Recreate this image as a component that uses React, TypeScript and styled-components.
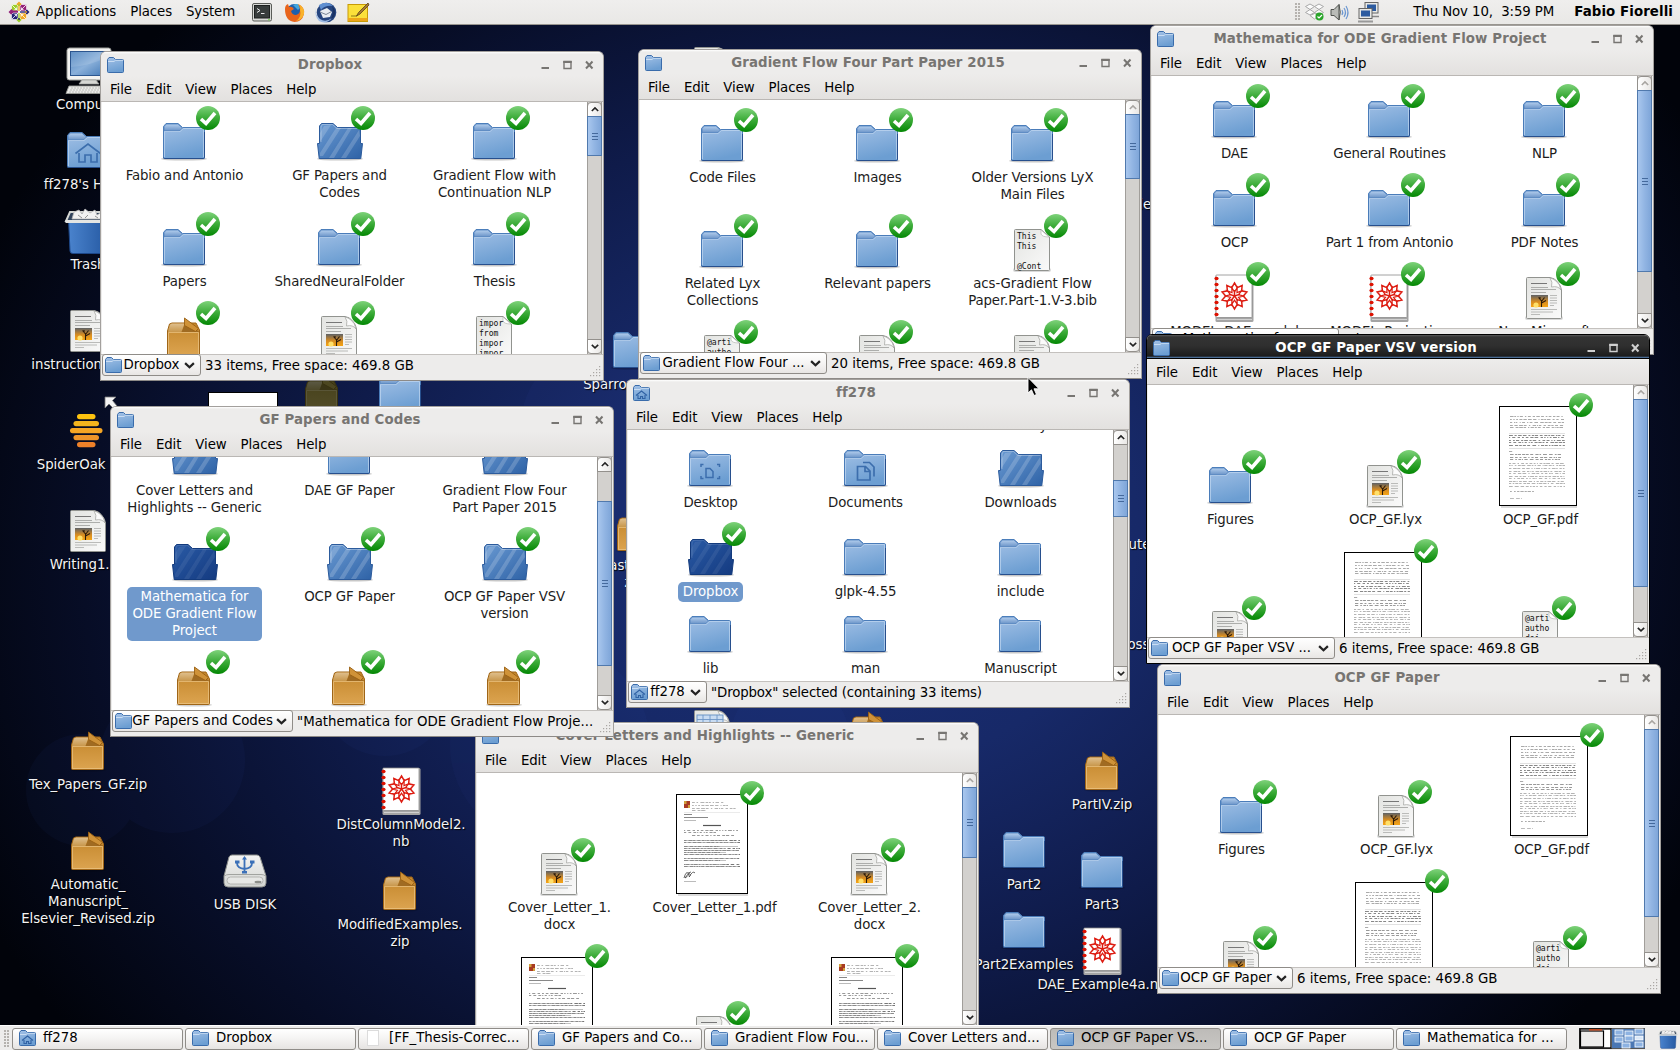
import React from "react";
import styled, { createGlobalStyle, css } from "styled-components";

const Global = createGlobalStyle`
  html, body { margin: 0; padding: 0; }
  body { overflow: hidden; font-family: "DejaVu Sans", sans-serif; font-size: 13.33px; color: #000; }
  * { box-sizing: border-box; }
`;

/* ---------- shell ---------- */
const Screen = styled.div`
  width: 1680px; height: 1050px; display: flex; flex-direction: column; overflow: hidden;
  background: #050a1c;
`;
const Desktop = styled.main`
  position: relative; height: 1000px; flex: none;
`;
const Wallpaper = styled.svg`
  position: absolute; left: 0; top: -25px; width: 1680px; height: 1050px;
`;
const Panel = styled.header`
  height: 25px; flex: none; display: flex; align-items: center; position: relative; z-index: 5;
  background: linear-gradient(#efeeed, #e9e8e6); border-bottom: 1px solid #98958f; padding: 0 7px 0 8px;
  white-space: pre; letter-spacing: -0.1px;
`;
const PanelText = styled.span<{ $bold?: boolean; $ml: number }>`
  margin-left: ${(p) => p.$ml}px; font-weight: ${(p) => (p.$bold ? 700 : 400)}; line-height: 22px;
  ${(p) => p.$bold && css`letter-spacing: 0.1px;`}
`;
const PanelIcon = styled.svg<{ $ml: number }>`
  margin-left: ${(p) => p.$ml}px; flex: none; display: block; overflow: visible;
`;
const Push = styled.div`flex: 1;`;
const Grip = styled.div<{ $h: number }>`
  width: 6px; height: ${(p) => p.$h}px; flex: none;
  background-image: radial-gradient(circle at 1px 1px, #b5b2ae 0.8px, transparent 1px);
  background-size: 3px 3px;
`;
const Taskbar = styled.footer`
  height: 25px; flex: none; display: flex; align-items: center; background: #edeceb; position: relative; z-index: 5;
  border-top: 1px solid #fff; padding: 1px 4px 0 4px;
`;
const TaskList = styled.div`display: flex; gap: 2px; margin-left: 2px;`;
const Task = styled.div<{ $active?: boolean }>`
  width: 171px; height: 22px; border: 1px solid #8f8c88; border-radius: 3px; display: flex; align-items: center;
  padding: 0 6px 1px; gap: 7px; white-space: nowrap; line-height: 18px;
  background: ${(p) => (p.$active ? "linear-gradient(#bdbbb8, #c9c7c4)" : "linear-gradient(#ffffff, #f4f3f2 50%, #e6e4e2)")};
`;

/* ---------- window chrome ---------- */
const Frame = styled.section<{ $x: number; $y: number; $h: number; $active?: boolean }>`
  position: absolute; left: ${(p) => p.$x}px; top: ${(p) => p.$y - 25}px; width: 504px; height: ${(p) => p.$h}px;
  display: flex; flex-direction: column; background: #edeceb; overflow: hidden;
  border: 1px solid ${(p) => (p.$active ? "#000" : "#a3a09d")}; border-bottom-color: ${(p) => (p.$active ? "#000" : "#8d8a87")};
  border-radius: 6px 6px 0 0;
`;
const TitleBar = styled.div<{ $active?: boolean }>`
  height: 24px; flex: none; display: flex; align-items: center; padding: 1px 9px 0 6px;
  color: ${(p) => (p.$active ? "#fff" : "#777572")};
  background: ${(p) =>
    p.$active ? "linear-gradient(#5a5a5a 0, #333 2px, #2f2f2f 45%, #1c1c1c 88%, #4b6f99 94%, #000 97%)" : "linear-gradient(#fff 0, #edeceb 2px)"};
`;
const Title = styled.h1`
  margin: 0; flex: 1; text-align: center; font-size: 13.33px; font-weight: 700; line-height: 22px; white-space: pre;
  padding-right: 5px; letter-spacing: 0.12px;
`;
const WinButtons = styled.svg`width: 53px; height: 10px; display: block; flex: none;`;
const MenuBar = styled.nav`
  height: 26px; flex: none; display: flex; padding: 4px 0 0 2px; line-height: 20px; letter-spacing: -0.1px;
  background: linear-gradient(#edeceb, #e3e1df); border-bottom: 1px solid #bab7b4;
`;
const MenuItem = styled.span`padding: 0 7px;`;
const Body = styled.div`flex: 1; min-height: 0; display: flex; padding: 0 1px;`;
const View = styled.div<{ $scroll: number }>`
  flex: 1; min-width: 0; background: #fff; overflow: hidden; padding: 0 5px;
  & > :first-child { margin-top: ${(p) => p.$scroll}px; }
`;
const Row = styled.div<{ $badged: boolean }>`
  display: grid; grid-template-columns: repeat(3, 155px); padding: ${(p) => (p.$badged ? 12 : 0)}px 0 12px;
`;
const Cell = styled.div`display: flex; flex-direction: column; align-items: center;`;
const IconSlot = styled.div<{ $h: number }>`
  height: ${(p) => p.$h}px; display: flex; align-items: flex-end; margin-right: 1px;
`;
const IconWrap = styled.div`position: relative; display: block;`;
const Badge = styled.svg`position: absolute; right: -12px; top: -12px; width: 24px; height: 24px; display: block;`;
const Glyph = styled.svg`display: block; overflow: visible; flex: none;`;
const Label = styled.div<{ $selected?: boolean; $desk?: boolean }>`
  line-height: 17px; text-align: center; white-space: pre; color: #1c1c1c; letter-spacing: -0.12px;
  padding-top: 1px; margin-bottom: -1px;
  ${(p) => p.$selected && css`
    background: #7099cc; color: #fff; border-radius: 5px; padding: 1px 5px 2px; margin-bottom: -3px;
  `}
  ${(p) => p.$desk && css`color: #f4f4f4; text-shadow: 1px 1px 1px #000; letter-spacing: -0.05px;`}
`;
const DeskItem = styled.div<{ $x: number; $y: number; $dim?: boolean }>`
  position: absolute; left: ${(p) => p.$x - 90}px; top: ${(p) => p.$y - 25}px; width: 180px;
  display: flex; flex-direction: column; align-items: center;
  ${(p) => p.$dim && css`& > svg { filter: brightness(0.45) hue-rotate(18deg) saturate(0.75); }`}
`;
const LinkMark = styled.svg`position: absolute; left: 106px; top: -11px; width: 14px; height: 22px;`;

const Scroll = styled.div`width: 15px; flex: none; display: flex; flex-direction: column; background: #d3d1ce; border-left: 1px solid #a19e9a; border-right: 1px solid #a19e9a;`;
const ScrollBtn = styled.div<{ $down?: boolean }>`
  height: 15px; flex: none; margin: 0 -1px; border: 1px solid #93908c; background: linear-gradient(90deg, #fff, #e9e7e5);
  border-radius: ${(p) => (p.$down ? "0 0 4px 4px" : "4px 4px 0 0")}; display: flex; align-items: center; justify-content: center;
`;
const Thumb = styled.div<{ $gap: number; $h: number }>`
  height: ${(p) => p.$h}px; margin: ${(p) => p.$gap - 1}px -1px 0; flex: none; border: 1px solid #5079ad;
  background: linear-gradient(90deg, #a9c7ee, #92b5e3 50%, #7fa6d9); display: flex; align-items: center; justify-content: center;
`;
const Filler = styled.div`flex: 1;`;
const StatusBar = styled.div`
  height: 26px; flex: none; display: flex; padding: 0 1px 0 1px; position: relative;
  border-top: 1px solid #c4c1be;
`;
const PathButton = styled.div<{ $w: number }>`
  width: ${(p) => p.$w}px; height: 22px; margin-top: -1px; border: 1px solid #8f8c88; border-radius: 3px; display: flex; align-items: center;
  background: linear-gradient(#fff, #f6f5f4 50%, #e8e6e4); padding: 0 5px 0 2px; flex: none; white-space: nowrap;
`;
const PathText = styled.span`flex: 1; text-align: center; line-height: 20px; padding-right: 3px; letter-spacing: -0.05px;`;
const StatusText = styled.span<{ $tight?: boolean }>`
  margin-left: 4px; line-height: 22px; white-space: nowrap; letter-spacing: ${(p) => (p.$tight ? -0.13 : 0)}px;
`;
const Resize = styled.svg`position: absolute; right: 2px; bottom: 3px; width: 12px; height: 12px;`;

/* ---------- drawings ---------- */
const Defs = styled.svg`position: absolute; width: 0; height: 0;`;
const SharedDefs = () => (
  <Defs>
    <defs>
      <linearGradient id="fold" x1="0" y1="0" x2="0.3" y2="1"><stop offset="0" stopColor="#a3c1e6" /><stop offset="1" stopColor="#6c9ed2" /></linearGradient>
      <linearGradient id="tab" x1="0" y1="0" x2="0" y2="1"><stop offset="0" stopColor="#b5cfee" /><stop offset="1" stopColor="#6791c6" /></linearGradient>
      <linearGradient id="open" x1="0" y1="0" x2="1" y2="1"><stop offset="0" stopColor="#6b9bd3" /><stop offset="1" stopColor="#2e62a6" /></linearGradient>
      <linearGradient id="openSel" x1="0" y1="0" x2="1" y2="1"><stop offset="0" stopColor="#2a5ba6" /><stop offset="1" stopColor="#143a80" /></linearGradient>
      <linearGradient id="ok" x1="0" y1="0" x2="0" y2="1"><stop offset="0" stopColor="#7ed27a" /><stop offset="0.5" stopColor="#3bab38" /><stop offset="1" stopColor="#038703" /></linearGradient>
      <linearGradient id="box" x1="0" y1="0" x2="0" y2="1"><stop offset="0" stopColor="#c3862b" /><stop offset="1" stopColor="#dca450" /></linearGradient>
      <linearGradient id="lid" x1="0" y1="0" x2="0" y2="1"><stop offset="0" stopColor="#dfbf8d" /><stop offset="1" stopColor="#c8974c" /></linearGradient>
      <linearGradient id="page" x1="0" y1="0" x2="1" y2="1"><stop offset="0" stopColor="#e3e4e1" /><stop offset="1" stopColor="#fafafa" /></linearGradient>
      <linearGradient id="sun" x1="0" y1="0" x2="0" y2="1"><stop offset="0" stopColor="#5d6166" /><stop offset="0.55" stopColor="#d58b22" /><stop offset="1" stopColor="#f6a515" /></linearGradient>
      <linearGradient id="scr" x1="0" y1="0" x2="1" y2="1"><stop offset="0" stopColor="#4b82be" /><stop offset="0.5" stopColor="#8ab0da" /><stop offset="1" stopColor="#3f76b4" /></linearGradient>
      <linearGradient id="bin" x1="0" y1="0" x2="1" y2="0"><stop offset="0" stopColor="#4a83cd" /><stop offset="1" stopColor="#2559a2" /></linearGradient>
      <linearGradient id="usb" x1="0" y1="0" x2="0" y2="1"><stop offset="0" stopColor="#f4f4f3" /><stop offset="1" stopColor="#d2d4d1" /></linearGradient>
    </defs>
  </Defs>
);

type Kind = "folder" | "home" | "desk" | "docs" | "open" | "openSel" | "box" | "doc" | "plain" | "code" | "nb" | "paper" | "letter" | "computer" | "trash" | "oak" | "usb" | "sheet" | "blank";

const FolderArt = ({ kind }: { kind: Kind }) => (
  <>
    <ellipse cx="24" cy="41" rx="23" ry="1.6" fill="#000" opacity="0.22" />
    <path d="M3.5 39.5V8.5L6 5.5H18L22.500 9.500H43.500Q44.500 9.500 44.500 11V39.500Q44.500 40.500 43.500 40.500H4.500Q3.500 40.500 3.500 39.500Z" fill="url(#fold)" stroke="#4a7cb9" />
    <path d="M4 12.500V8.700L6.200 6H17.800L22.500 10L19.500 13H4.500Z" fill="url(#tab)" stroke="#4f80bd" strokeWidth="0.8" />
    <path d="M4.500 39V13.500H20L23.300 10.500H43.500V39" fill="none" stroke="#c5daf2" strokeWidth="0.9" opacity="0.75" />
    <path d="M3.500 39.500Q3.500 40.500 4.500 40.500H43.500Q44.500 40.500 44.500 39.500V14" fill="none" stroke="#274f8d" />
    {kind === "home" && <path d="M11.500 26.500 24 17l12.500 9.500M15 26v9h6v-7h6v7h6v-9" fill="none" stroke="#3c6ead" strokeWidth="1.7" />}
    {kind === "desk" && <path d="M20 23.500h4l3 3v6h-7ZM15 22v-2.500h2.500M31 19.500h2.500V22M15 31v2.500h2.500M31 33.500h2.500V31" fill="none" stroke="#3c6ead" strokeWidth="1.5" />}
    {kind === "docs" && <path d="M16.500 21.500h8l4.500 4.500v9h-12.500ZM24 22v4.500h5M22 17.500h6.500l4.500 4.500v9.500" fill="none" stroke="#3c6ead" strokeWidth="1.7" />}
  </>
);

const OpenArt = ({ sel }: { sel?: boolean }) => {
  const shape = "M4.500 9V8L6.500 5.500H18L22.500 9.500H45.500V25.500H47.500L45.800 40.500H4.200L2.500 25.500H4.500Z";
  return (
    <>
      <ellipse cx="25" cy="41" rx="23" ry="1.6" fill="#000" opacity="0.22" />
      <path d={shape} fill={`url(#${sel ? "openSel" : "open"})`} />
      <path d="M9 8 5 15V24L16 7ZM21 10 5 35V38L8 38 26 10ZM33 10 14 40H19L37 10ZM44 12 26 40H31L45 18Z" fill="#fff" opacity={sel ? 0.07 : 0.18} />
      <path d={shape} fill="none" stroke={sel ? "#133a7c" : "#2c5b9c"} />
      <path d="M6 24V9L7.200 6.500H17.500L22 10.500H44.500" fill="none" stroke="#fff" strokeWidth="0.8" opacity={sel ? 0.15 : 0.4} />
    </>
  );
};

const BoxArt = () => (
  <>
    <ellipse cx="24" cy="43" rx="18" ry="1.600" fill="#000" opacity="0.18" />
    <path d="M7.500 18 9.500 11 12 10H36L39.500 17V41.500Q39.500 42.500 38.500 42.500H8.500Q7.500 42.500 7.500 41.500Z" fill="url(#box)" stroke="#9f6517" />
    <path d="M8 18.500 10 11.500 12 10.500H24.500L21.500 19H8Z" fill="url(#lid)" />
    <path d="M21.500 19 24.500 12 38.500 18 39 19Z" fill="#a06b22" />
    <path d="M24.500 5 38.500 15.500 35.500 18.500 24.500 12.500Z" fill="#cf9238" stroke="#9a6013" strokeWidth="0.9" />
    <path d="M8.500 41.500V19.500H38.500V41.500Z" fill="none" stroke="#edc88a" strokeWidth="0.9" opacity="0.75" />
  </>
);

const PageShape = ({ fold = true }: { fold?: boolean }) => (
  <>
    <rect x="5" y="42" width="38" height="4" rx="2" fill="#000" opacity="0.15" />
    <path d={fold ? "M6.500 4.500Q6.500 3.500 7.500 3.500H30Q35 4 38 8.500 41 12 41.500 16V43.500Q41.500 44.500 40.500 44.500H7.500Q6.500 44.500 6.500 43.500Z" : "M6.500 4.500Q6.500 3.500 7.500 3.500H33L41.500 11V43.500Q41.500 44.500 40.500 44.500H7.500Q6.500 44.500 6.500 43.500Z"} fill="url(#page)" stroke="#91938f" />
    {fold ? <path d="M30 4Q33 8 31.500 13 38 11.500 41 16 40 10 36 7 33 4.500 30 4Z" fill="#fbfbfb" stroke="#a9aba7" strokeWidth="0.8" /> : <path d="M33 4V8Q34 11 41 11Z" fill="#fff" stroke="#b5b7b3" strokeWidth="0.7" />}
  </>
);

const DocArt = ({ pic }: { pic?: boolean }) => (
  <>
    <PageShape />
    <path d="M11 9.500H27" stroke="#777" /><path d="M11 13.500H28M11 15.500H36M11 18.500H26" stroke="#a5a6a4" strokeWidth="0.9" />
    {pic && (
      <>
        <rect x="11" y="21" width="17" height="12" fill="url(#sun)" />
        <circle cx="16" cy="31" r="2.600" fill="#ffe06a" />
        <path d="M21.500 33V27L18.500 23.500M21.500 27.500 24.500 23.500M21.500 29 26 26.500M20 25.500V23" stroke="#2c1b0a" strokeWidth="1.1" fill="none" />
      </>
    )}
    <path d="M30 21.500H37M30 24H37M30 26.500H37M30 29H37M30 31.500H34M11 35.500H37M11 38H33M11 40.500H20" stroke="#b3b4b2" strokeWidth="0.9" />
  </>
);

const CodeArt = ({ lines }: { lines: string[] }) => (
  <>
    <PageShape fold={false} />
    {lines.map((l, i) => (
      <text key={i} transform={`translate(9 ${13 + i * 10}) scale(1 1.15)`} fontFamily='"DejaVu Sans Mono", monospace' fontSize="8.100" fill="#111" xmlSpace="preserve">{l}</text>
    ))}
  </>
);

const ring = (n: number, r1: number, r2: number) =>
  Array.from({ length: n * 2 }, (_, i) => {
    const a = (i * Math.PI) / n - Math.PI / 2;
    const r = i % 2 ? r2 : r1;
    return `${(24.5 + Math.cos(a) * r).toFixed(2)},${(22 + Math.sin(a) * r).toFixed(2)}`;
  }).join(" ");

const NbArt = () => (
  <>
    <rect x="5.500" y="1" width="38" height="47" rx="1.500" fill="#a4a4a4" />
    <rect x="6" y="1" width="36" height="42.500" rx="0.500" fill="#fff" stroke="#8b8b8b" strokeWidth="0.8" />
    <path d="M7 45.500H42" stroke="#d0d0d0" />
    {[4, 10, 16, 22, 28, 34, 40].map((y) => <ellipse key={y} cx="6.500" cy={y + 0.5} rx="2.100" ry="1.800" fill="#dd1100" />)}
    <polygon points={ring(10, 13, 8.8)} fill="none" stroke="#dd1c11" strokeWidth="1.500" />
    <polygon points={ring(10, 4.2, 8.8)} fill="none" stroke="#dd1c11" strokeWidth="1.200" />
    {[0, 1, 2, 3, 4].map((i) => {
      const a = (i * 2 * Math.PI) / 5 - Math.PI / 2;
      return <path key={i} d={`M24.500 22L${24.5 + Math.cos(a) * 6} ${22 + Math.sin(a) * 6}`} stroke="#dd1c11" strokeWidth="1.500" />;
    })}
  </>
);

const rand = (n: number) => { const v = Math.sin(n * 127.1) * 43758.5453; return v - Math.floor(v); };
const dashes = (x0: number, x1: number, y: number, seed: number) => {
  let d = ""; let x = x0; let k = seed * 31;
  while (x < x1) { const w = 1 + rand(k++) * 3; d += `M${x.toFixed(1)} ${y}h${Math.min(w, x1 - x).toFixed(1)}`; x += w + 0.6 + rand(k++) * 1.8; }
  return d;
};

const PaperArt = () => {
  const rows: [number, number, number, string][] = [];
  [11, 14, 17, 20, 22].forEach((y) => rows.push([11, 65, y, "#aaa"]));
  [30, 32, 35, 37, 40].forEach((y) => rows.push([10, 66, y, "#888"]));
  rows.push([10, 15, 46, "#aaa"]);
  [49, 52, 54].forEach((y) => rows.push([11, 62, y, "#999"]));
  [58, 60, 63, 66, 68, 71, 73, 76, 78, 81].forEach((y) => rows.push([10, 66, y, "#b4b4b4"]));
  rows.push([11, 36, 86, "#aaa"], [11, 23, 93, "#bbb"]);
  return (
    <>
      <rect x="2" y="98" width="76" height="5" fill="#000" opacity="0.14" />
      <rect x="0.500" y="1.500" width="77" height="99" fill="#fff" stroke="#000" />
      <path d="M10 28.500H66M10 43.500H66" stroke="#ccc" strokeWidth="0.6" />
      {rows.map(([a, b, y, c], i) => <path key={i} d={dashes(a, b, y + 0.5, i + 3)} stroke={c} strokeWidth="1" />)}
    </>
  );
};

const LetterArt = () => {
  const solid = [47, 49, 53, 55, 57, 59, 61, 65, 67, 71, 73];
  return (
    <>
      <rect x="2" y="98" width="70" height="5" fill="#000" opacity="0.14" />
      <rect x="0.500" y="1.500" width="71" height="99" fill="#fff" stroke="#000" />
      <rect x="8" y="8" width="6" height="7" fill="#a83a22" /><path d="M8 8h2.500v3H8ZM12 12h2v3h-2Z" fill="#d2a13c" />
      <path d={dashes(16, 48, 9.5, 2) + dashes(16, 52, 12.5, 4) + dashes(16, 60, 15.5, 6) + dashes(16, 30, 17.5, 7)} stroke="#b4b4b4" strokeWidth="1" />
      <path d="M8 19.500H64" stroke="#ddd" strokeWidth="0.6" />
      <path d="M8 21.500H16M8 24.500H32" stroke="#888" strokeWidth="1" /><path d="M8 27.500H20" stroke="#bbb" strokeWidth="1" />
      <path d="M27 32.500H45" stroke="#555" strokeWidth="1.200" />
      <path d={dashes(8, 62, 37.5, 9) + dashes(8, 40, 39.5, 11) + dashes(16, 58, 42.5, 15)} stroke="#999" strokeWidth="1" />
      {solid.map((y, i) => <path key={y} d={dashes(8, i % 3 === 2 ? 44 : 64, y + 0.5, i + 20)} stroke="#777" strokeWidth="1" />)}
      {solid.map((y) => <path key={`s${y}`} d={`M8 ${y + 0.5}H${y % 4 === 1 ? 62 : 50}`} stroke="#999" strokeWidth="1" opacity="0.6" />)}
      <path d="M8 85q2-7 4-5t-3 5q4-6 5-4t-1 3q4-7 6-4M12 80l3-1" fill="none" stroke="#444" strokeWidth="0.8" />
      <path d="M8 88.500H20" stroke="#aaa" strokeWidth="0.8" />
    </>
  );
};

const ComputerArt = () => (
  <>
    <rect x="2" y="1" width="44" height="32" rx="2.500" fill="#f3f3f1" stroke="#9b9d99" />
    <rect x="5.500" y="4.500" width="37" height="24" fill="url(#scr)" stroke="#2c568f" />
    <path d="M6 20Q25 19 42 10V5H6Z" fill="#fff" opacity="0.12" />
    <path d="M17 33h14l3 4H14Z" fill="#d6d7d4" stroke="#a0a19e" strokeWidth="0.8" />
    <path d="M4 39H44L47 46.500H1Z" fill="#e9e9e7" stroke="#9b9d99" strokeWidth="0.9" />
    <path d="M6 41H42M5 43H43M4 45H44" stroke="#b9bab7" strokeWidth="0.9" strokeDasharray="2 1" />
  </>
);
const TrashArt = () => (
  <>
    <path d="M4.500 13 6 44Q6 46.500 9 46.500H39Q42 46.500 42 44L43.500 13Z" fill="url(#bin)" stroke="#1c4687" />
    <path d="M6 5H42L46 14H2Z" fill="#31435c" stroke="#d5d7d4" strokeWidth="2" />
    <path d="M8 12 10 5 15 3 18 7 21 2 26 6 31 3 33 8 38 5 41 12Z" fill="#f1f1f1" stroke="#b5b5b5" strokeWidth="0.8" />
    <path d="M14 8l4 3M24 8l-3 3M31 9l3 2" stroke="#888" strokeWidth="0.9" />
    <path d="M1.500 14.500H46.500" stroke="#e4e5e3" strokeWidth="3" />
  </>
);
const OakArt = () => (
  <>
    {[["#fdc30f", 13, 18.5, 7], ["#f3b41d", 9.5, 25.5, 14], ["#f5a524", 6, 32.5, 21], ["#ee9429", 9.5, 25.5, 28], ["#ee8129", 13, 18.5, 35]].map(([c, x, w, y]) => (
      <rect key={y as number} x={x} y={y} width={w} height="5.200" rx="2.600" fill={c as string} />
    ))}
  </>
);
const UsbArt = () => (
  <>
    <path d="M8 10Q9 8 11 8H36Q38 8 39 10L45 29V36Q45 40 41 40H7Q3 40 3 36V29Z" fill="url(#usb)" stroke="#8d8f8b" />
    <path d="M3.500 29Q5 27.500 8 27.500H40Q43 27.500 44.500 29" fill="none" stroke="#a1a39f" />
    <rect x="6" y="30" width="36" height="7" rx="3.500" fill="#e6e7e5" stroke="#a8aaa6" strokeWidth="0.8" />
    <ellipse cx="37" cy="35" rx="3.500" ry="1.300" fill="#8b8d89" />
    <path d="M23.500 25V11M23.500 22Q16 21 16 16M23.500 22Q31 21 31 16" stroke="#3b70b8" strokeWidth="1.800" fill="none" />
    <path d="M23.500 9 26 12.500H21ZM14 13.500h4.500v3H14ZM29 13.500h4.500v3H29ZM21 24h5v2.500h-5Z" fill="#3b70b8" />
  </>
);
const SheetArt = () => (
  <>
    <PageShape />
    <rect x="9" y="8" width="26" height="26" fill="#c9dcf2" stroke="#6d95c6" />
    <path d="M9 12.500H35M9 17H35M9 21.500H35M15 8V34M22 8V34M29 8V34" stroke="#6d95c6" strokeWidth="0.9" />
  </>
);

const sizeOf = (k: Kind): [number, number] => (k === "paper" ? [82, 105] : k === "letter" ? [76, 105] : [48, 48]);
const Art = ({ kind, code }: { kind: Kind; code?: string[] }) => {
  switch (kind) {
    case "open": return <OpenArt />;
    case "openSel": return <OpenArt sel />;
    case "box": return <BoxArt />;
    case "doc": return <DocArt pic />;
    case "plain": return <DocArt />;
    case "code": return <CodeArt lines={code || []} />;
    case "nb": return <NbArt />;
    case "paper": return <PaperArt />;
    case "letter": return <LetterArt />;
    case "computer": return <ComputerArt />;
    case "trash": return <TrashArt />;
    case "oak": return <OakArt />;
    case "usb": return <UsbArt />;
    case "sheet": return <SheetArt />;
    case "blank": return <rect x="-11.500" y="-2.500" width="69" height="60" fill="#fff" stroke="#000" />;
    default: return <FolderArt kind={kind} />;
  }
};
const Icon = ({ kind, code }: { kind: Kind; code?: string[] }) => {
  const [w, h] = sizeOf(kind);
  return <Glyph width={w} height={h} viewBox={`0 0 ${w} ${h}`}><Art kind={kind} code={code} /></Glyph>;
};
const OkBadge = () => (
  <Badge viewBox="0 0 24 24">
    <circle cx="12" cy="12" r="12" fill="url(#ok)" />
    <path d="M5 13 10 17.500 19 7" fill="none" stroke="#fff" strokeWidth="3.600" />
  </Badge>
);
const MiniFolder = ({ home }: { home?: boolean }) => (
  <Glyph width={17} height={16} viewBox="0 0 17 16">
    <path d="M0.500 14.500V2.500L2 0.500H6.500L8.500 2.500H15.500Q16.500 2.500 16.500 3.500V14.500Q16.500 15.500 15.500 15.500H1.500Q0.500 15.500 0.500 14.500Z" fill="url(#fold)" stroke="#3a6cab" />
    <path d="M1 4.500H7L8.500 3.300H16" fill="none" stroke="#d7e6f7" strokeWidth="0.8" />
    {home && <path d="M3 10.500 8.500 6 14 10.500M5 10V13.500H7.500V11.500H9.500V13.500H12V10" fill="none" stroke="#3062a4" strokeWidth="1.100" />}
  </Glyph>
);
const Chevron = ({ up, dim, w = 11 }: { up?: boolean; dim?: boolean; w?: number }) => (
  <Glyph width={w} height={w * 0.6} viewBox="0 0 10 6">
    <path d={up ? "M1 5 5 1.200 9 5" : "M1 1 5 4.800 9 1"} fill="none" stroke={dim ? "#a8a5a1" : "#222"} strokeWidth={2} />
  </Glyph>
);

/* ---------- data ---------- */
type Item = { k: Kind; n: string; b?: boolean; sel?: boolean; code?: string[] };
type Win = {
  x: number; y: number; h: number; title: string; path: string; pathW: number; status: string; home?: boolean; active?: boolean;
  scroll: number; thumb: [number, number]; rows: Item[][];
};
const f = (n: string): Item => ({ k: "folder", n, b: true });
const artCode = ["@arti", "autho", "doi ="];
const ocpRows: Item[][] = [
  [f("Figures"), { k: "doc", n: "OCP_GF.lyx", b: true }, { k: "paper", n: "OCP_GF.pdf", b: true }],
  [{ k: "doc", n: "", b: true }, { k: "paper", n: "", b: true }, { k: "code", n: "", b: true, code: artCode }],
];
const windows: Win[] = [
  { x: 475, y: 722, h: 330, title: "Cover Letters and Highlights -- Generic", path: "", pathW: 187, status: "", scroll: 8, thumb: [0, 71],
    rows: [
      [{ k: "doc", n: "Cover_Letter_1.\ndocx", b: true }, { k: "letter", n: "Cover_Letter_1.pdf", b: true }, { k: "doc", n: "Cover_Letter_2.\ndocx", b: true }],
      [{ k: "letter", n: "", b: true }, { k: "plain", n: "", b: true }, { k: "letter", n: "", b: true }],
    ] },
  { x: 626, y: 379, h: 329, title: "ff278", path: "ff278", pathW: 79, status: "\"Dropbox\" selected (containing 33 items)", home: true, scroll: -62, thumb: [36, 37],
    rows: [
      [{ k: "folder", n: "" }, { k: "folder", n: "" }, { k: "folder", n: "Memory" }],
      [{ k: "desk", n: "Desktop" }, { k: "docs", n: "Documents" }, { k: "open", n: "Downloads" }],
      [{ k: "openSel", n: "Dropbox", b: true, sel: true }, { k: "folder", n: "glpk-4.55" }, { k: "folder", n: "include" }],
      [{ k: "folder", n: "lib" }, { k: "folder", n: "man" }, { k: "folder", n: "Manuscript" }],
    ] },
  { x: 100, y: 51, h: 330, title: "Dropbox", path: "Dropbox", pathW: 99, status: "33 items, Free space: 469.8 GB", scroll: 4, thumb: [0, 40],
    rows: [
      [f("Fabio and Antonio"), { k: "open", n: "GF Papers and\nCodes", b: true }, f("Gradient Flow with\nContinuation NLP")],
      [f("Papers"), f("SharedNeuralFolder"), f("Thesis")],
      [{ k: "box", n: "", b: true }, { k: "doc", n: "", b: true }, { k: "code", n: "", b: true, code: ["impor", "from", "impor", "impor"] }],
    ] },
  { x: 638, y: 49, h: 330, title: "Gradient Flow Four Part Paper 2015", path: "Gradient Flow Four ...", pathW: 187, status: "20 items, Free space: 469.8 GB", scroll: 8, thumb: [0, 65],
    rows: [
      [f("Code Files"), f("Images"), f("Older Versions LyX\nMain Files")],
      [f("Related Lyx\nCollections"), f("Relevant papers"), { k: "code", n: "acs-Gradient Flow\nPaper.Part-1.V-3.bib", b: true, code: ["This", "This", "", "@Cont"] }],
      [{ k: "code", n: "", b: true, code: artCode }, { k: "plain", n: "", b: true }, { k: "plain", n: "", b: true }],
    ] },
  { x: 110, y: 406, h: 331, title: "GF Papers and Codes", path: "GF Papers and Codes", pathW: 181, status: "\"Mathematica for ODE Gradient Flow Proje...", scroll: -36, thumb: [30, 165],
    rows: [
      [{ k: "open", n: "Cover Letters and\nHighlights -- Generic", b: true }, f("DAE GF Paper"), { k: "open", n: "Gradient Flow Four\nPart Paper 2015", b: true }],
      [{ k: "openSel", n: "Mathematica for\nODE Gradient Flow\nProject", b: true, sel: true }, { k: "open", n: "OCP GF Paper", b: true }, { k: "open", n: "OCP GF Paper VSV\nversion", b: true }],
      [{ k: "box", n: "", b: true }, { k: "box", n: "", b: true }, { k: "box", n: "", b: true }],
    ] },
  { x: 1150, y: 25, h: 330, title: "Mathematica for ODE Gradient Flow Project", path: "Mathematica for ...", pathW: 187, status: "9 items, Free space: 469.8 GB", scroll: 8, thumb: [0, 182],
    rows: [
      [f("DAE"), f("General Routines"), f("NLP")],
      [f("OCP"), f("Part 1 from Antonio"), f("PDF Notes")],
      [{ k: "nb", n: "MODEL_DAE_model", b: true }, { k: "nb", n: "MODEL_Projection", b: true }, { k: "doc", n: "New Microsoft", b: true }],
    ] },
  { x: 1157, y: 664, h: 330, title: "OCP GF Paper", path: "OCP GF Paper", pathW: 134, status: "6 items, Free space: 469.8 GB", scroll: 8, thumb: [0, 188], rows: ocpRows },
  { x: 1146, y: 334, h: 330, title: "OCP GF Paper VSV version", path: "OCP GF Paper VSV ...", pathW: 187, status: "6 items, Free space: 469.8 GB", active: true, scroll: 8, thumb: [0, 188], rows: ocpRows },
];

const deskItems: { k: Kind; x: number; y: number; n: string; dim?: boolean; link?: boolean }[] = [
  { k: "computer", x: 89, y: 47, n: "Computer" },
  { k: "home", x: 88, y: 127, n: "ff278's Home" },
  { k: "trash", x: 88, y: 207, n: "Trash" },
  { k: "doc", x: 88, y: 307, n: "instructions.docx" },
  { k: "oak", x: 88, y: 407, n: "SpiderOak Hive", link: true },
  { k: "doc", x: 88, y: 507, n: "Writing1.nb" },
  { k: "box", x: 88, y: 727, n: "Tex_Papers_GF.zip" },
  { k: "box", x: 88, y: 827, n: "Automatic_\nManuscript_\nElsevier_Revised.zip" },
  { k: "blank", x: 244, y: 395, n: "" },
  { k: "usb", x: 245, y: 847, n: "USB DISK" },
  { k: "box", x: 322, y: 371, n: "", dim: true },
  { k: "folder", x: 400, y: 371, n: "" },
  { k: "nb", x: 401, y: 767, n: "DistColumnModel2.\nnb" },
  { k: "box", x: 400, y: 867, n: "ModifiedExamples.\nzip" },
  { k: "folder", x: 634, y: 327, n: "Sparrow_Codes" },
  { k: "box", x: 634, y: 508, n: "Master_v1.\nzip" },
  { k: "plain", x: 712, y: 44, n: "" },
  { k: "sheet", x: 712, y: 707, n: "" },
  { k: "box", x: 868, y: 707, n: "" },
  { k: "folder", x: 1102, y: 147, n: "Base1Example" },
  { k: "folder", x: 1102, y: 487, n: "Data_compute" },
  { k: "folder", x: 1102, y: 587, n: "ExampleGross" },
  { k: "box", x: 1102, y: 747, n: "PartIV.zip" },
  { k: "folder", x: 1024, y: 827, n: "Part2" },
  { k: "folder", x: 1102, y: 847, n: "Part3" },
  { k: "folder", x: 1024, y: 907, n: "Part2Examples" },
  { k: "nb", x: 1102, y: 927, n: "DAE_Example4a.nb" },
];

const tasks: { n: string; icon: "home" | "folder" | "page"; active?: boolean }[] = [
  { n: "ff278", icon: "home" }, { n: "Dropbox", icon: "folder" }, { n: "[FF_Thesis-Correc...", icon: "page" },
  { n: "GF Papers and Co...", icon: "folder" }, { n: "Gradient Flow Fou...", icon: "folder" }, { n: "Cover Letters and...", icon: "folder" },
  { n: "OCP GF Paper VS...", icon: "folder", active: true }, { n: "OCP GF Paper", icon: "folder" }, { n: "Mathematica for ...", icon: "folder" },
];

/* ---------- composites ---------- */
const FileWindow = ({ w }: { w: Win }) => (
  <Frame $x={w.x} $y={w.y} $h={w.h} $active={w.active}>
    <TitleBar $active={w.active}>
      <MiniFolder home={w.home} />
      <Title>{w.title}</Title>
      <WinButtons viewBox="0 0 53 10">
        <g stroke={w.active ? "#d0d0d0" : "#777572"} fill="none" strokeWidth="2">
          <path d="M0.500 8H8" />
          <path d="M23 1.500H30V8.500H23Z" strokeWidth="1.400" /><path d="M22.300 2H30.700" />
          <path d="M45 1.500 51.500 8.500M51.500 1.500 45 8.500" />
        </g>
      </WinButtons>
    </TitleBar>
    <MenuBar>{["File", "Edit", "View", "Places", "Help"].map((m) => <MenuItem key={m}>{m}</MenuItem>)}</MenuBar>
    <Body>
      <View $scroll={w.scroll}>
        {w.rows.map((row, ri) => {
          const slot = Math.max(...row.map((it) => sizeOf(it.k)[1]));
          return (
            <Row key={ri} $badged={row.some((it) => it.b)}>
              {row.map((it, i) => (
                <Cell key={i}>
                  <IconSlot $h={slot}><IconWrap><Icon kind={it.k} code={it.code} />{it.b && <OkBadge />}</IconWrap></IconSlot>
                  <Label $selected={it.sel}>{it.n || " "}</Label>
                </Cell>
              ))}
            </Row>
          );
        })}
      </View>
      <Scroll>
        <ScrollBtn><Chevron up dim={w.scroll === 8} w={8} /></ScrollBtn>
        <Thumb $gap={w.thumb[0]} $h={w.thumb[1]}>
          <Glyph width="6" height="7" viewBox="0 0 6 7"><path d="M0 0.500H6M0 3.500H6M0 6.500H6" stroke="#44699c" /></Glyph>
        </Thumb>
        <Filler />
        <ScrollBtn $down><Chevron w={8} /></ScrollBtn>
      </Scroll>
    </Body>
    <StatusBar>
      <PathButton $w={w.pathW}><MiniFolder home={w.home} /><PathText>{w.path}</PathText><Chevron /></PathButton>
      <StatusText $tight={w.home}>{w.status}</StatusText>
      <Resize viewBox="0 0 12 12">
        {[0, 1, 2, 3].map((r) => Array.from({ length: r + 1 }, (_, c) => <rect key={`${r}${c}`} x={10 - c * 3} y={1 + r * 3} width="1.200" height="1.200" fill="#aaa7a3" />))}
      </Resize>
    </StatusBar>
  </Frame>
);

const Background = () => (
  <Wallpaper viewBox="0 0 1680 1050">
    <defs>
      <radialGradient id="glow" gradientUnits="userSpaceOnUse" cx="0" cy="0" r="1" gradientTransform="translate(850 540) rotate(-8) scale(960 780)">
        <stop offset="0" stopColor="#1a2f78" /><stop offset="0.3" stopColor="#172968" /><stop offset="0.55" stopColor="#0f1b4a" /><stop offset="0.8" stopColor="#070d26" /><stop offset="1" stopColor="#01030a" />
      </radialGradient>
    </defs>
    <rect width="1680" height="1050" fill="url(#glow)" />
    <g fill="#3b5fd0" opacity="0.045">
      <circle cx="172" cy="760" r="73" /><circle cx="82" cy="790" r="56" /><circle cx="550" cy="745" r="100" /><circle cx="385" cy="690" r="66" />
      <circle cx="790" cy="740" r="60" /><circle cx="610" cy="430" r="90" />
    </g>
  </Wallpaper>
);

const TopPanel = () => (
  <Panel>
    <PanelIcon $ml={0} width="22" height="22" viewBox="0 0 22 22">
      {[["#efa724", "#9ccd2a"], ["#262577", "#efa724"], ["#9ccd2a", "#262577"], ["#932279", "#932279"]].map(([a, b], i) => (
        <g key={i} transform={`rotate(${i * 90} 11 11)`}>
          <path d="M11 0.500 14 3.500 12.500 5V10H9.500V5L8 3.500Z" fill={a} />
          <path d="M3.500 3.500H8.500L10 5V10H5L3.500 8.500Z" fill={["#9ccd2a", "#932279", "#efa724", "#262577"][i]} stroke="#fff" strokeWidth="0.6" />
          <path d="M4 4 10 10M8.500 6.500V8.500H6.500" stroke="#fff" strokeWidth="0.8" fill="none" />
          <circle cx="11" cy="4" r="0.900" fill={b} />
        </g>
      ))}
    </PanelIcon>
    <PanelText $ml={6}>Applications</PanelText>
    <PanelText $ml={14}>Places</PanelText>
    <PanelText $ml={14}>System</PanelText>
    <PanelIcon $ml={17} width="21" height="19" viewBox="0 0 21 19">
      <rect x="0.500" y="0.500" width="19" height="17.500" rx="1.500" fill="#d8d9d6" stroke="#5a5c58" /><rect x="2.500" y="2.500" width="15" height="12.500" fill="#383d3c" stroke="#1d201f" />
      <path d="M5 5.500 8 7.500 5 9.500M9 10.500H12.500" stroke="#e8e8e8" fill="none" /><path d="M16 16.800h2" stroke="#6ad13d" />
    </PanelIcon>
    <PanelIcon $ml={11} width="21" height="21" viewBox="0 0 21 21">
      <circle cx="10.500" cy="10" r="8" fill="#1e5fae" /><path d="M9 3Q14 0 17 5L14 8Z" fill="#41a6dd" />
      <path d="M1 7Q1 3 4 2L5 5Q8 4 10 7L7 9Q8 13 12 13 16 12 16 8 16 5 14 2 21 5 20 12 18 20 10.500 20 1 19 1 7Z" fill="#e8641b" />
      <path d="M16 8Q17 4 14 2 21 5 20 12 18 18 12 19 18 15 16 8Z" fill="#f9b32c" />
    </PanelIcon>
    <PanelIcon $ml={10} width="22" height="21" viewBox="0 0 22 21">
      <circle cx="11.500" cy="10.500" r="9.800" fill="#26457f" /><path d="M4 3Q12-2 18 4 10 3 6 8Z" fill="#5f8fd1" />
      <path d="M5 9 12 6 17 10 15 15 8 16Z" fill="#e9edf2" /><path d="M5 10 11 12.500 16.500 9.500" stroke="#7b8797" fill="none" />
      <path d="M1 5Q-0.500 13 5 17T17 16Q11 23 4 19 -1 14 1 5Z" fill="#9fbce4" /><path d="M17 4Q22 9 19 15L16 17Q19 10 17 4Z" fill="#1a3364" />
    </PanelIcon>
    <PanelIcon $ml={10} width="22" height="21" viewBox="0 0 22 21">
      <rect x="1" y="2.500" width="19.500" height="17" fill="#fbe03a" stroke="#c79a06" /><path d="M1 17.500H20.500" stroke="#eda61a" strokeWidth="3" /><path d="M4 14H10" stroke="#8d7a16" />
      <path d="M21 1 11.500 10.500 9.500 14 13 12 22 3Z" fill="#a77a33" stroke="#5b4317" strokeWidth="0.8" />
    </PanelIcon>
    <Push />
    <Grip $h={18} />
    <PanelIcon $ml={4} width="20" height="18" viewBox="0 0 20 18">
      <path d="M5 1 9.500 3.500 5 6.500 0.500 3.500ZM14 1 18.500 3.500 14 6.500 9.500 3.500ZM5 6.500 9.500 9.500 5 12 0.500 9.500ZM14 6.500 18.500 9.500 14 12 9.500 9.500ZM5 12.500 9.500 10.500 14 12.500 9.500 16Z" fill="#fbfbfb" stroke="#a9a9a9" />
      <circle cx="14.500" cy="13.500" r="4" fill="#2aa52a" /><path d="M12.500 13.500 14 15 17 12" stroke="#fff" strokeWidth="1.200" fill="none" />
    </PanelIcon>
    <PanelIcon $ml={5} width="20" height="19" viewBox="0 0 20 19">
      <path d="M1 6.500H4L9 1.500V17L4 12.500H1Z" fill="#b9bbb7" stroke="#4f524e" /><path d="M9 1.500Q11.500 9 9 17" fill="none" stroke="#4f524e" />
      <path d="M12 7Q13.500 9.500 12 12M14 5Q17 9.500 14 14M16 3Q20 9.500 16 16" fill="none" stroke="#6c97d1" strokeWidth="1.200" />
    </PanelIcon>
    <PanelIcon $ml={7} width="23" height="21" viewBox="0 0 23 21">
      <rect x="8" y="0.500" width="13" height="10.500" fill="#e8e9e6" stroke="#666" /><rect x="10" y="2.500" width="9" height="6.500" fill="#2c5ba0" /><path d="M11 14.500H22" stroke="#888" strokeWidth="1.500" />
      <rect x="2" y="6.500" width="13" height="10" fill="#e8e9e6" stroke="#666" /><rect x="4" y="8.500" width="9" height="6" fill="#2c5ba0" /><path d="M1 19.500H16" stroke="#999" strokeWidth="2" />
    </PanelIcon>
    <PanelText $ml={33}>Thu Nov 10,  3:59 PM</PanelText>
    <PanelText $ml={20} $bold>Fabio Fiorelli</PanelText>
  </Panel>
);

const BottomPanel = () => (
  <Taskbar>
    <Grip $h={18} />
    <TaskList>
      {tasks.map((t) => (
        <Task key={t.n} $active={t.active}>
          {t.icon === "page" ? <Glyph width="17" height="16" viewBox="0 0 17 16"><rect x="2.500" y="0.500" width="11" height="15" fill="#fff" stroke="#dcdcdc" /></Glyph> : <MiniFolder home={t.icon === "home"} />}
          {t.n}
        </Task>
      ))}
    </TaskList>
    <PanelIcon $ml={12} width="66" height="21" viewBox="0 0 66 21">
      <rect x="0.500" y="0.500" width="65" height="20" fill="#fff" stroke="#555" />
      <rect x="1" y="1" width="31" height="19" fill="#fff" stroke="#000" strokeWidth="1.300" /><rect x="1.500" y="3" width="23" height="16" fill="#edeceb" stroke="#000" strokeWidth="1.200" /><path d="M10 1.800H23" stroke="#c0491f" strokeWidth="1.600" />
      <rect x="33" y="1" width="32.500" height="19" fill="#4a77b4" />
      {[[36, 2, 8, 5], [46, 3, 8, 5], [56, 1, 8, 5], [36, 9, 8, 5], [46, 8, 8, 5], [56, 8, 8, 4], [43, 15, 8, 5], [56, 14, 8, 5]].map(([x, y, a, b]) => (
        <rect key={`${x}-${y}`} x={x} y={y} width={a} height={b} fill={x === 56 && y === 8 ? "#dbe8f8" : "#8db2e2"} stroke="#fff" strokeWidth="0.8" />
      ))}
    </PanelIcon>
    <PanelIcon $ml={13} width="20" height="20" viewBox="0 0 48 48"><TrashArt /></PanelIcon>
  </Taskbar>
);

const Cursor = styled.svg`position: absolute; left: 1027px; top: 352px; width: 13px; height: 20px; overflow: visible;`;

export default function App() {
  return (
    <Screen>
      <Global />
      <SharedDefs />
      <TopPanel />
      <Desktop>
        <Background />
        {deskItems.map((d, i) => (
          <DeskItem key={i} $x={d.x} $y={d.y} $dim={d.dim}>
            <Icon kind={d.k} />
            {d.link && <LinkMark viewBox="0 0 14 22"><path d="M1 1H12L8.500 4.500 13 10 10 13 5 8 1 12Z" fill="#f4f4f4" stroke="#777" strokeWidth="0.8" /></LinkMark>}
            <Label $desk>{d.n}</Label>
          </DeskItem>
        ))}
        {windows.map((w) => <FileWindow key={w.title} w={w} />)}
        <Cursor viewBox="0 0 13 20"><path d="M1 0.500V16L4.500 12.800 7 18.500 9.500 17.500 7 11.800H12Z" fill="#000" stroke="#fff" strokeWidth="0.9" /></Cursor>
      </Desktop>
      <BottomPanel />
    </Screen>
  );
}
